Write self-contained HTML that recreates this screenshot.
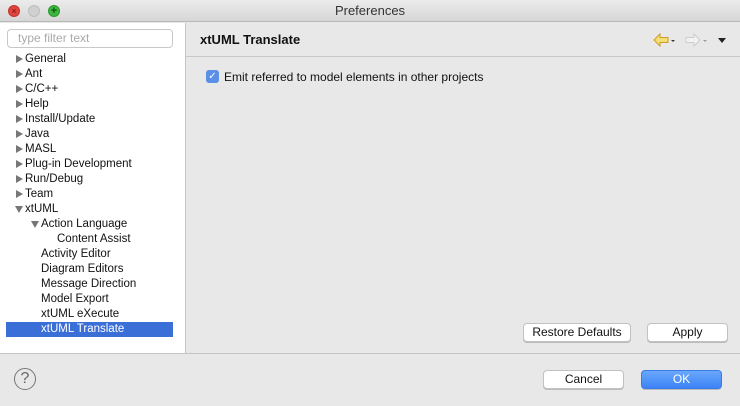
<!DOCTYPE html>
<html><head><style>
*{margin:0;padding:0;box-sizing:border-box}
body{width:740px;height:406px;overflow:hidden;background:#e8e8e8;font-family:"Liberation Sans",sans-serif;font-size:11.5px;color:#111;position:relative}
.abs{position:absolute}
.title{left:0;top:0;width:740px;height:22px;background:linear-gradient(#ececec,#d6d6d6);border-bottom:1px solid #b8b8b8;text-align:center;font-size:13px;line-height:22px;color:#333}
.dot{width:12px;height:12px;border-radius:50%;top:5px}
.left{left:0;top:23px;width:186px;height:330px;background:#fff;border-right:1px solid #c4c4c4}
.filter{left:7px;top:29px;width:166px;height:19px;border:1px solid #c8c8c8;border-radius:4px;background:#fff;color:#aaa;font-size:12px;padding-left:10px;line-height:17px}
.it{position:absolute;height:15px;line-height:15px;white-space:nowrap}
.tri{position:absolute;width:0;height:0;border-top:4.5px solid transparent;border-bottom:4.5px solid transparent;border-left:7px solid #777}
.trd{position:absolute;width:0;height:0;border-left:4.5px solid transparent;border-right:4.5px solid transparent;border-top:7px solid #777}
.btn{position:absolute;height:19px;background:#fff;border:1px solid #c2c2c2;border-radius:4px;text-align:center;line-height:17px;font-size:12px;box-shadow:0 1px 0 #bbb}
</style></head><body>
<div class="abs title">Preferences</div>
<div class="abs dot" style="left:8px;background:#e0443e;border:1px solid #c4342d;color:#7a1010;font-size:9px;line-height:10px;text-align:center">×</div>
<div class="abs dot" style="left:28px;background:#d0d0d0;border:1px solid #bcbcbc"></div>
<div class="abs dot" style="left:48px;background:#3fb640;border:1px solid #2a9a2a;color:#0b5a0b;font-size:11px;line-height:10px;text-align:center;font-weight:bold">+</div>
<div class="abs left"></div>
<div class="abs filter">type filter text</div>
<div class="tri" style="left:16px;top:55px"></div><div class="it" style="left:25px;top:52px">General</div>
<div class="tri" style="left:16px;top:70px"></div><div class="it" style="left:25px;top:67px">Ant</div>
<div class="tri" style="left:16px;top:85px"></div><div class="it" style="left:25px;top:82px">C/C++</div>
<div class="tri" style="left:16px;top:100px"></div><div class="it" style="left:25px;top:97px">Help</div>
<div class="tri" style="left:16px;top:115px"></div><div class="it" style="left:25px;top:112px">Install/Update</div>
<div class="tri" style="left:16px;top:130px"></div><div class="it" style="left:25px;top:127px">Java</div>
<div class="tri" style="left:16px;top:145px"></div><div class="it" style="left:25px;top:142px">MASL</div>
<div class="tri" style="left:16px;top:160px"></div><div class="it" style="left:25px;top:157px">Plug-in Development</div>
<div class="tri" style="left:16px;top:175px"></div><div class="it" style="left:25px;top:172px">Run/Debug</div>
<div class="tri" style="left:16px;top:190px"></div><div class="it" style="left:25px;top:187px">Team</div>
<div class="trd" style="left:15px;top:206px"></div><div class="it" style="left:25px;top:202px">xtUML</div>
<div class="trd" style="left:31px;top:221px"></div><div class="it" style="left:41px;top:217px">Action Language</div>
<div class="it" style="left:57px;top:232px">Content Assist</div>
<div class="it" style="left:41px;top:247px">Activity Editor</div>
<div class="it" style="left:41px;top:262px">Diagram Editors</div>
<div class="it" style="left:41px;top:277px">Message Direction</div>
<div class="it" style="left:41px;top:292px">Model Export</div>
<div class="it" style="left:41px;top:307px">xtUML eXecute</div>
<div class="abs" style="left:6px;top:322px;width:167px;height:15px;background:#3b6fd8"></div>
<div class="it" style="left:41px;top:322px;color:#fff">xtUML Translate</div>
<div class="abs" style="left:200px;top:32px;font-weight:bold;font-size:13px">xtUML Translate</div>
<svg class="abs" style="left:652px;top:32px" width="80" height="16">
<path d="M2 8 L8 2 L8 5.5 L16 5.5 L16 10.5 L8 10.5 L8 14 Z" fill="#f7dc7a" stroke="#c9a020"/>
<path d="M19 8 L23 8 L21 10Z" fill="#333"/>
<path d="M48 8 L42 2 L42 5.5 L34 5.5 L34 10.5 L42 10.5 L42 14 Z" fill="#f2f2f2" stroke="#ccc"/>
<path d="M51 8 L55 8 L53 10Z" fill="#999"/>
<path d="M66 6 L74 6 L70 11Z" fill="#222"/>
</svg>
<div class="abs" style="left:186px;top:56px;width:554px;height:1px;background:#c8c8c8"></div>
<div class="abs" style="left:206px;top:70px;width:13px;height:13px;border-radius:3px;background:#5b8fe8;color:#fff;font-size:10px;line-height:13px;text-align:center">✓</div>
<div class="abs" style="left:224px;top:70px;font-size:12px">Emit referred to model elements in other projects</div>
<div class="btn" style="left:523px;top:323px;width:108px">Restore Defaults</div>
<div class="btn" style="left:647px;top:323px;width:81px">Apply</div>
<div class="abs" style="left:0;top:353px;width:740px;height:1px;background:#c4c4c4"></div>
<div class="abs" style="left:14px;top:368px;width:22px;height:22px;border:1.5px solid #777;border-radius:50%;text-align:center;line-height:19px;font-size:16px;color:#666">?</div>
<div class="btn" style="left:543px;top:370px;width:81px">Cancel</div>
<div class="btn" style="left:641px;top:370px;width:81px;background:linear-gradient(#6aa8fb,#3c83f6);border-color:#3a7ae8;color:#fff">OK</div>
</body></html>
